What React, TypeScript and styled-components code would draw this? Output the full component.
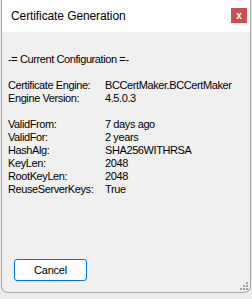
import React from "react";
import styled, { createGlobalStyle } from "styled-components";

const GlobalStyle = createGlobalStyle`
  html, body {
    margin: 0;
    padding: 0;
    background: #ececec;
  }
  body {
    font-family: "Liberation Sans", Arial, sans-serif;
  }
`;

const Window = styled.div`
  position: relative;
  margin-left: 1px;
  width: 248px;
  height: 292px;
  border: 1px solid #a8a8a8;
  border-top: none;
  border-radius: 0 0 7px 7px;
  background: #f0f0f0;
  display: flex;
  flex-direction: column;
  overflow: hidden;
`;

const TitleBar = styled.div`
  height: 32px;
  background: #ffffff;
  display: flex;
  align-items: center;
  justify-content: space-between;
  padding: 0 3px 0 9px;
  box-sizing: border-box;
`;

const Title = styled.span`
  font-family: "Liberation Sans", Arial, sans-serif;
  font-size: 12px;
  letter-spacing: -0.1px;
  color: #000;
  margin-top: -1px;
`;

const CloseButton = styled.div`
  width: 16px;
  height: 15px;
  margin-top: -1px;
  background: #c75050;
  color: #fff;
  font-size: 10px;
  font-weight: bold;
  display: flex;
  align-items: center;
  justify-content: center;
  line-height: 1;
`;

const Body = styled.div`
  flex: 1;
  padding: 21px 6px 0 6px;
  display: flex;
  flex-direction: column;
  font-size: 11px;
  letter-spacing: -0.4px;
  line-height: 13px;
  color: #000;
`;

const Heading = styled.div`
  margin-bottom: 13px;
`;

const Table = styled.div<{ $gap?: boolean }>`
  display: grid;
  grid-template-columns: 97px auto;
  margin-bottom: ${(p) => (p.$gap ? "13px" : "0")};
`;

const Footer = styled.div`
  margin-top: auto;
  padding: 0 0 11px 6px;
`;

const Button = styled.button`
  width: 73px;
  height: 22px;
  background: #fdfdfd;
  border: 1px solid #0078d7;
  border-radius: 3px;
  font-family: "Liberation Sans", Arial, sans-serif;
  font-size: 11px;
  letter-spacing: -0.2px;
  color: #000;
  padding: 0;
`;

const Grip = styled.svg`
  position: absolute;
  right: 1px;
  bottom: 1px;
`;

const engine: [string, string][] = [
  ["Certificate Engine:", "BCCertMaker.BCCertMaker"],
  ["Engine Version:", "4.5.0.3"],
];

const settings: [string, string][] = [
  ["ValidFrom:", "7 days ago"],
  ["ValidFor:", "2 years"],
  ["HashAlg:", "SHA256WITHRSA"],
  ["KeyLen:", "2048"],
  ["RootKeyLen:", "2048"],
  ["ReuseServerKeys:", "True"],
];

const Rows = ({ rows }: { rows: [string, string][] }) => (
  <>
    {rows.map(([k, v]) => (
      <React.Fragment key={k}>
        <span>{k}</span>
        <span>{v}</span>
      </React.Fragment>
    ))}
  </>
);

export default function App() {
  return (
    <>
      <GlobalStyle />
      <Window>
        <TitleBar>
          <Title>Certificate Generation</Title>
          <CloseButton>x</CloseButton>
        </TitleBar>
        <Body>
          <Heading>-= Current Configuration =-</Heading>
          <Table $gap>
            <Rows rows={engine} />
          </Table>
          <Table>
            <Rows rows={settings} />
          </Table>
          <Footer>
            <Button>Cancel</Button>
          </Footer>
        </Body>
        <Grip width="10" height="10" viewBox="0 0 10 10">
          <g fill="#a0a0a0">
            <rect x="7" y="1" width="2" height="2" />
            <rect x="4" y="4" width="2" height="2" />
            <rect x="7" y="4" width="2" height="2" />
            <rect x="1" y="7" width="2" height="2" />
            <rect x="4" y="7" width="2" height="2" />
            <rect x="7" y="7" width="2" height="2" />
          </g>
        </Grip>
      </Window>
    </>
  );
}
